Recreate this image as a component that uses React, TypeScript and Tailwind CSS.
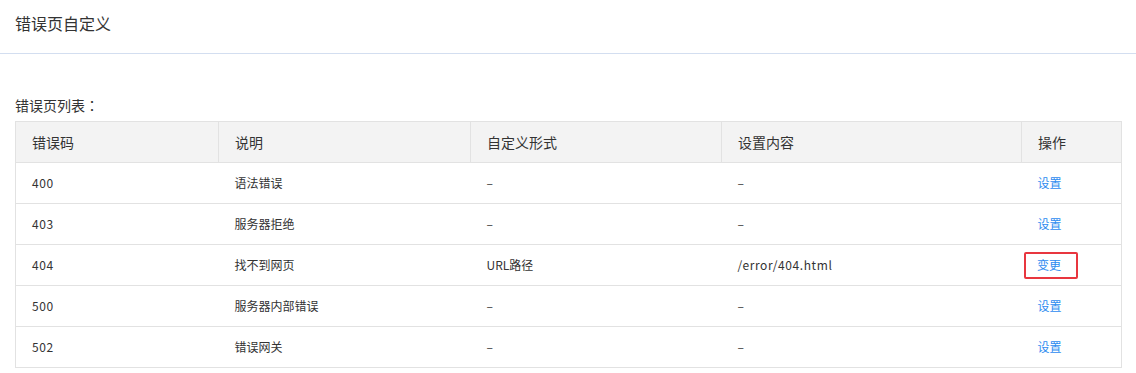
import React from "react";

const rows = [
  { code: "400", desc: "语法错误", form: "–", content: "–", action: "设置" },
  { code: "403", desc: "服务器拒绝", form: "–", content: "–", action: "设置" },
  { code: "404", desc: "找不到网页", form: "URL路径", content: "/error/404.html", action: "变更" },
  { code: "500", desc: "服务器内部错误", form: "–", content: "–", action: "设置" },
  { code: "502", desc: "错误网关", form: "–", content: "–", action: "设置" },
];

export default function App() {
  return (
    <div
      className="w-[1136px] h-[373px] bg-white text-[#333]"
      style={{ fontFamily: '"Noto Sans CJK SC", "Noto Sans", sans-serif' }}
    >
      <div className="h-[54px] border-b border-[#d3def0] pl-[15px] flex items-center pb-[7px]">
        <span className="text-[16px] text-[#333]">错误页自定义</span>
      </div>
      <div className="px-[15px]">
        <div className="h-[67px] flex items-end pb-[6px] text-[14px] leading-[20px] text-[#333]">
          错误页列表
          <span style={{ fontFamily: '"Noto Sans CJK TC", sans-serif' }}>：</span>
        </div>
        <table className="w-[1106px] border-collapse text-[12px] table-fixed">
          <colgroup>
            <col className="w-[203px]" />
            <col className="w-[252px]" />
            <col className="w-[251px]" />
            <col className="w-[300px]" />
            <col className="w-[100px]" />
          </colgroup>
          <thead>
            <tr className="h-[41px] bg-[#f3f3f3]">
              {["错误码", "说明", "自定义形式", "设置内容", "操作"].map((h) => (
                <th
                  key={h}
                  className="border border-[#e2e2e2] text-left font-normal text-[14px] pl-[16px] text-[#333]"
                >
                  {h}
                </th>
              ))}
            </tr>
          </thead>
          <tbody>
            {rows.map((r) => (
              <tr key={r.code} className="h-[41px]">
                <td className="border-y border-l border-[#e2e2e2] pl-[16px] tracking-[0.6px]">{r.code}</td>
                <td className="border-y border-[#e2e2e2] pl-[16px]">{r.desc}</td>
                <td className="border-y border-[#e2e2e2] pl-[16px]">{r.form}</td>
                <td className="border-y border-[#e2e2e2] pl-[16px] tracking-[0.6px]">{r.content}</td>
                <td className="border-y border-r border-[#e2e2e2] pl-[2px]">
                  {r.action === "变更" ? (
                    <span className="inline-flex items-center justify-center w-[54px] h-[27px] border-2 border-[#e8363f] rounded-[2px] text-[#2d8cf0] pr-[3px]">
                      {r.action}
                    </span>
                  ) : (
                    <span className="text-[#2d8cf0] pl-[14px]">{r.action}</span>
                  )}
                </td>
              </tr>
            ))}
          </tbody>
        </table>
      </div>
    </div>
  );
}
